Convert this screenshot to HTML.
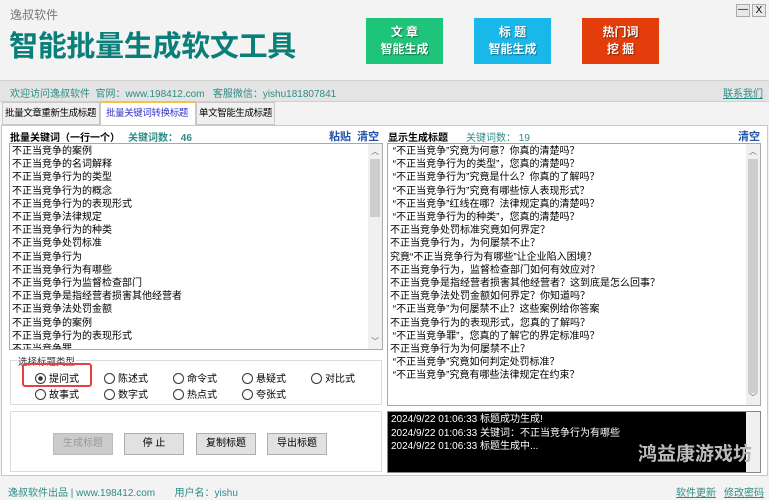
<!DOCTYPE html>
<html><head><meta charset="utf-8"><style>
*{margin:0;padding:0;box-sizing:border-box}
body{width:769px;height:500px;overflow:hidden;background:#f3f3f3;font-family:"Liberation Sans","Noto Sans CJK SC",sans-serif;position:relative;font-size:10px;color:#000}
.a{position:absolute;white-space:nowrap}
.btn{position:absolute;color:#fff;font-weight:bold;font-size:12px;text-align:center;line-height:17px;padding-top:6px;text-shadow:1px 1px 1px rgba(0,0,0,.4)}
.list{position:absolute;background:#fff;border:1px solid #a8a8a8;overflow:hidden;font-size:10px;line-height:13.2px;padding:1px 0 0 2px}
.sb{position:absolute;top:0;right:0;width:14px;bottom:0;background:#f0f0f0}
.sb i{position:absolute;left:2px;width:10px;background:#cdcdcd}
.sb b{position:absolute;left:0;width:14px;text-align:center;font-size:8px;color:#606060;font-weight:normal}
.rad{position:absolute;font-size:10px;white-space:nowrap}
.rad:before{content:"";display:inline-block;width:9px;height:9px;border:1px solid #333;border-radius:50%;vertical-align:-2px;margin-right:3px;background:#fff}
.rad.on:before{background:radial-gradient(circle,#333 0 2px,#fff 2.5px)}
.gb{position:absolute;border:1px solid #dcdcdc;background:#fff}
.b2{position:absolute;top:433px;width:60px;height:22px;background:#e1e1e1;border:1px solid #adadad;text-align:center;line-height:20px;font-size:10px}
.tab{position:absolute;font-size:9.5px;letter-spacing:-0.4px;line-height:22px;overflow:hidden}
</style></head><body>
<div class="a" style="left:10px;top:6px;font-size:12px;color:#777">逸叔软件</div>
<div class="a" style="left:9px;top:23px;font-size:29px;font-weight:bold;color:#0a7f7a;letter-spacing:-0.3px">智能批量生成软文工具</div>
<div class="btn" style="left:366px;top:18px;width:77px;height:46px;background:#1ec47a">文 章<br>智能生成</div>
<div class="btn" style="left:474px;top:18px;width:77px;height:46px;background:#1ab8ea">标 题<br>智能生成</div>
<div class="btn" style="left:582px;top:18px;width:77px;height:46px;background:#e23d0a">热门词<br>挖 掘</div>
<div class="a" style="left:736px;top:4px;width:14px;height:13px;border:1px solid #aaa;background:#e8e8e8;text-align:center;font-size:10px;line-height:10px">—</div>
<div class="a" style="left:752px;top:4px;width:14px;height:13px;border:1px solid #aaa;background:#e8e8e8;text-align:center;font-size:10px;line-height:11px">X</div>
<div class="a" style="left:0;top:80px;width:769px;height:22px;background:#e4e4e4;border-top:1px solid #d0d0d0;border-bottom:1px solid #d0d0d0"></div>
<div class="a" style="left:10px;top:85px;font-size:10px;color:#2d8c86">欢迎访问逸叔软件 &nbsp;官网：www.198412.com &nbsp; 客服微信：yishu181807841</div>
<div class="a" style="left:723px;top:85px;font-size:10px;color:#2d8c86;text-decoration:underline">联系我们</div>
<div class="tab" style="left:2px;top:102px;width:98px;height:23px;border:1px solid #c8c8c8;background:#f0f0f0;padding-left:2px">批量文章重新生成标题</div>
<div class="tab" style="left:100px;top:101px;width:96px;height:25px;border:1px solid #c8c8c8;border-top:2px solid #f5c14a;border-bottom:none;background:#fff;padding-left:5px;color:#3333cc">批量关键词转换标题</div>
<div class="tab" style="left:196px;top:102px;width:79px;height:23px;border:1px solid #c8c8c8;background:#f0f0f0;padding-left:2px">单文智能生成标题</div>
<div class="a" style="left:1px;top:125px;width:767px;height:351px;background:#fff;border:1px solid #c8c8c8"></div>
<div class="a" style="left:10px;top:129px;font-size:10px;font-weight:bold">批量关键词（一行一个）</div>
<div class="a" style="left:128px;top:129px;font-size:10px;color:#2d8c86;font-weight:bold">关键词数：&nbsp;46</div>
<div class="a" style="left:329px;top:128px;font-size:11px;color:#2255aa;font-weight:bold">粘贴 &nbsp;清空</div>
<div class="a" style="left:388px;top:129px;font-size:10px;font-weight:bold">显示生成标题</div>
<div class="a" style="left:466px;top:129px;font-size:10px;color:#2d8c86">关键词数：&nbsp;19</div>
<div class="a" style="left:738px;top:128px;font-size:11px;color:#2255aa;font-weight:bold">清空</div>
<div class="list" style="left:9px;top:143px;width:374px;height:207px">不正当竞争的案例<br>不正当竞争的名词解释<br>不正当竞争行为的类型<br>不正当竞争行为的概念<br>不正当竞争行为的表现形式<br>不正当竞争法律规定<br>不正当竞争行为的种类<br>不正当竞争处罚标准<br>不正当竞争行为<br>不正当竞争行为有哪些<br>不正当竞争行为监督检查部门<br>不正当竞争是指经营者损害其他经营者<br>不正当竞争法处罚金额<br>不正当竞争的案例<br>不正当竞争行为的表现形式<br>不正当竞争罪
<div class="sb"><b style="top:1px">︿</b><i style="top:15px;height:58px"></i><b style="bottom:1px">﹀</b></div></div>
<div class="list" style="left:387px;top:143px;width:374px;height:263px">&nbsp;“不正当竞争”究竟为何意？你真的清楚吗？<br>&nbsp;“不正当竞争行为的类型”，您真的清楚吗？<br>&nbsp;“不正当竞争行为”究竟是什么？你真的了解吗？<br>&nbsp;“不正当竞争行为”究竟有哪些惊人表现形式？<br>&nbsp;“不正当竞争”红线在哪？法律规定真的清楚吗？<br>&nbsp;“不正当竞争行为的种类”，您真的清楚吗？<br>不正当竞争处罚标准究竟如何界定？<br>不正当竞争行为，为何屡禁不止？<br>究竟“不正当竞争行为有哪些”让企业陷入困境？<br>不正当竞争行为，监督检查部门如何有效应对？<br>不正当竞争是指经营者损害其他经营者？这到底是怎么回事？<br>不正当竞争法处罚金额如何界定？你知道吗？<br>&nbsp;“不正当竞争”为何屡禁不止？这些案例给你答案<br>不正当竞争行为的表现形式，您真的了解吗？<br>&nbsp;“不正当竞争罪”，您真的了解它的界定标准吗？<br>不正当竞争行为为何屡禁不止？<br>&nbsp;“不正当竞争”究竟如何判定处罚标准？<br>&nbsp;“不正当竞争”究竟有哪些法律规定在约束？
<div class="sb"><b style="top:1px">︿</b><i style="top:15px;height:234px"></i><b style="bottom:1px">﹀</b></div></div>
<div class="gb" style="left:10px;top:360px;width:372px;height:45px"></div>
<div class="a" style="left:17px;top:354px;font-size:9.5px;background:#fff;padding:0 1px;color:#333">选择标题类型</div>
<div class="a" style="left:22px;top:363px;width:70px;height:24px;border:2px solid #e84040;border-radius:3px"></div>
<div class="rad on" style="left:35px;top:370px">提问式</div>
<div class="rad" style="left:104px;top:370px">陈述式</div>
<div class="rad" style="left:173px;top:370px">命令式</div>
<div class="rad" style="left:242px;top:370px">悬疑式</div>
<div class="rad" style="left:311px;top:370px">对比式</div>
<div class="rad" style="left:35px;top:386px">故事式</div>
<div class="rad" style="left:104px;top:386px">数字式</div>
<div class="rad" style="left:173px;top:386px">热点式</div>
<div class="rad" style="left:242px;top:386px">夸张式</div>
<div class="gb" style="left:10px;top:411px;width:372px;height:61px"></div>
<div class="b2" style="left:53px;color:#999;background:#ccc;border-color:#bbb">生成标题</div>
<div class="b2" style="left:124px">停 止</div>
<div class="b2" style="left:196px">复制标题</div>
<div class="b2" style="left:267px">导出标题</div>
<div class="a" style="left:387px;top:411px;width:374px;height:62px;background:#000;border:1px solid #888;color:#fff;font-size:10px;line-height:13.5px;padding:1px 0 0 3px;overflow:hidden">2024/9/22 01:06:33 标题成功生成!<br>2024/9/22 01:06:33 关键词：不正当竞争行为有哪些<br>2024/9/22 01:06:33 标题生成中...
<div style="position:absolute;right:0;top:0;width:14px;bottom:0;background:#f0f0f0"></div>
<div style="position:absolute;left:250px;top:36px;font-size:19px;font-weight:bold;color:#bbb;white-space:nowrap">鸿益康游戏坊</div></div>
<div class="a" style="left:8px;top:484px;font-size:10px;color:#2d8c86">逸叔软件出品 | www.198412.com &nbsp; &nbsp; &nbsp; 用户名：yishu</div>
<div class="a" style="left:676px;top:484px;font-size:10px;color:#2d8c86;text-decoration:underline">软件更新</div>
<div class="a" style="left:724px;top:484px;font-size:10px;color:#2d8c86;text-decoration:underline">修改密码</div>
</body></html>
